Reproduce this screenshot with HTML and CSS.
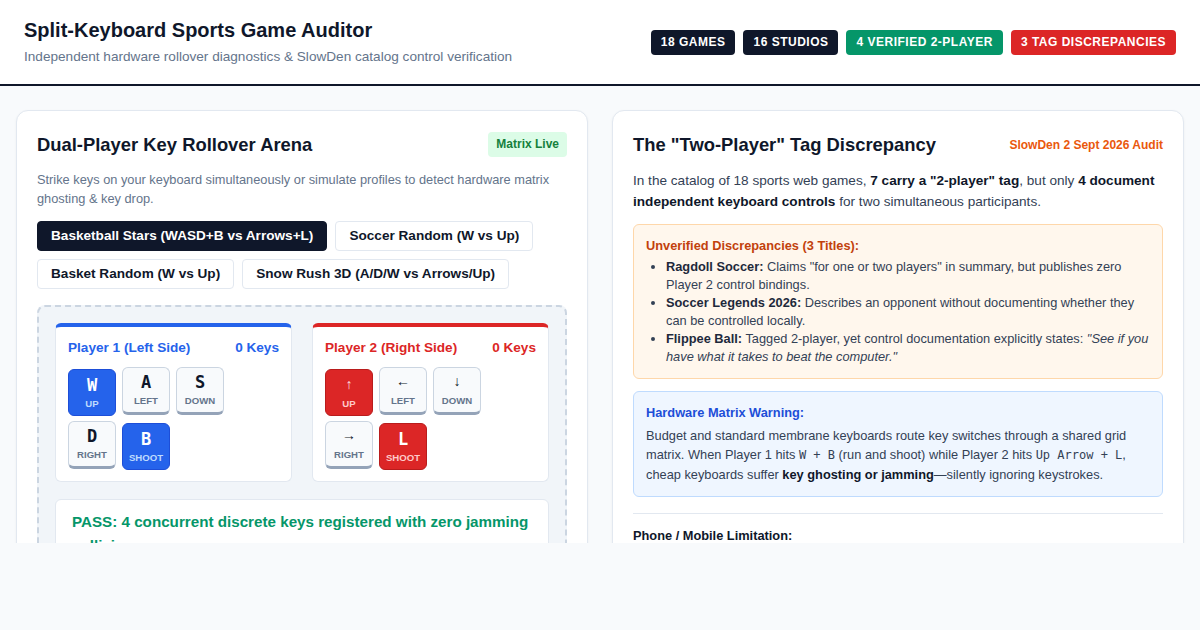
FILE: index.html
```html
<!DOCTYPE html>
<html lang="en">
<head>
<meta charset="utf-8">
<title>Split-Keyboard Sports Game Auditor</title>
<link rel="stylesheet" href="styles.css">
</head>
<body>
<header class="topbar">
  <div class="brand">
    <h1>Split-Keyboard Sports Game Auditor</h1>
    <p>Independent hardware rollover diagnostics &amp; SlowDen catalog control verification</p>
  </div>
  <div class="stats">
    <span class="stat stat-dark">18 Games</span>
    <span class="stat stat-dark">16 Studios</span>
    <span class="stat stat-green">4 Verified 2-Player</span>
    <span class="stat stat-red">3 Tag Discrepancies</span>
  </div>
</header>

<main class="layout">
  <section class="card">
    <div class="card-head">
      <h2>Dual-Player Key Rollover Arena</h2>
      <span class="live">Matrix Live</span>
    </div>
    <p class="muted">Strike keys on your keyboard simultaneously or simulate profiles to detect hardware matrix ghosting &amp; key drop.</p>
    <div class="profiles">
      <button class="profile active">Basketball Stars (WASD+B vs Arrows+L)</button>
      <button class="profile">Soccer Random (W vs Up)</button>
      <button class="profile">Basket Random (W vs Up)</button>
      <button class="profile">Snow Rush 3D (A/D/W vs Arrows/Up)</button>
    </div>
    <div class="arena">
      <div class="players">
        <div class="player player-one">
          <div class="player-head"><span>Player 1 (Left Side)</span><span>0 Keys</span></div>
          <div class="keys">
            <div class="key on"><span class="cap">W</span><span class="lbl">Up</span></div>
            <div class="key"><span class="cap">A</span><span class="lbl">Left</span></div>
            <div class="key"><span class="cap">S</span><span class="lbl">Down</span></div>
            <div class="key"><span class="cap">D</span><span class="lbl">Right</span></div>
            <div class="key on"><span class="cap">B</span><span class="lbl">Shoot</span></div>
          </div>
        </div>
        <div class="player player-two">
          <div class="player-head"><span>Player 2 (Right Side)</span><span>0 Keys</span></div>
          <div class="keys">
            <div class="key on"><span class="cap arrow">↑</span><span class="lbl">Up</span></div>
            <div class="key"><span class="cap arrow">←</span><span class="lbl">Left</span></div>
            <div class="key"><span class="cap arrow">↓</span><span class="lbl">Down</span></div>
            <div class="key"><span class="cap arrow">→</span><span class="lbl">Right</span></div>
            <div class="key on"><span class="cap">L</span><span class="lbl">Shoot</span></div>
          </div>
        </div>
      </div>
      <div class="result">PASS: 4 concurrent discrete keys registered with zero jamming collisions.</div>
    </div>
  </section>

  <section class="card">
    <div class="card-head">
      <h2>The "Two-Player" Tag Discrepancy</h2>
      <span class="audit">SlowDen 2 Sept 2026 Audit</span>
    </div>
    <p class="lead">In the catalog of 18 sports web games, <strong>7 carry a "2-player" tag</strong>, but only <strong>4 document independent keyboard controls</strong> for two simultaneous participants.</p>
    <div class="box box-orange">
      <h3>Unverified Discrepancies (3 Titles):</h3>
      <ul>
        <li><strong>Ragdoll Soccer:</strong> Claims "for one or two players" in summary, but publishes zero Player 2 control bindings.</li>
        <li><strong>Soccer Legends 2026:</strong> Describes an opponent without documenting whether they can be controlled locally.</li>
        <li><strong>Flippee Ball:</strong> Tagged 2-player, yet control documentation explicitly states: <em>"See if you have what it takes to beat the computer."</em></li>
      </ul>
    </div>
    <div class="box box-blue">
      <h3>Hardware Matrix Warning:</h3>
      <p>Budget and standard membrane keyboards route key switches through a shared grid matrix. When Player 1 hits <code>W + B</code> (run and shoot) while Player 2 hits <code>Up Arrow + L</code>, cheap keyboards suffer <strong>key ghosting or jamming</strong>—silently ignoring keystrokes.</p>
    </div>
    <hr class="divider">
    <h3 class="sub">Phone / Mobile Limitation:</h3>
  </section>
</main>
</body>
</html>
```

FILE: styles.css
```css
* { box-sizing: border-box; }

html, body {
  margin: 0;
  padding: 0;
  background: #f8fafc;
  font-family: "Liberation Sans", Arial, sans-serif;
  color: #0f172a;
}

.topbar {
  display: flex;
  justify-content: space-between;
  align-items: center;
  padding: 17px 24px;
  background: #ffffff;
  border-bottom: 2px solid #0f172a;
}

.brand h1 {
  margin: 0 0 4px;
  font-size: 20px;
  line-height: 26px;
  font-weight: 700;
  color: #0f172a;
}

.brand p {
  margin: 0;
  font-size: 13.6px;
  line-height: 20px;
  color: #64748b;
}

.stats {
  display: flex;
  gap: 8px;
}

.stat {
  display: inline-block;
  padding: 6px 10px;
  border-radius: 4px;
  font-size: 12px;
  line-height: 13px;
  font-weight: 700;
  letter-spacing: 0.5px;
  text-transform: uppercase;
  color: #ffffff;
}

.stat-dark { background: #0f172a; }
.stat-green { background: #059669; }
.stat-red { background: #dc2626; }

.layout {
  display: grid;
  grid-template-columns: 1fr 1fr;
  gap: 24px;
  align-items: start;
  padding: 24px 16px 0;
  height: 457px;
  overflow: hidden;
}

.card {
  background: #ffffff;
  border: 1px solid #e2e8f0;
  border-radius: 12px;
  padding: 21px 20px 24px;
  box-shadow: 0 1px 3px rgba(15, 23, 42, 0.05);
}

.card-head {
  display: flex;
  justify-content: space-between;
  align-items: center;
  margin-bottom: 13px;
  min-height: 25px;
}

.card-head h2 {
  margin: 0;
  font-size: 18.4px;
  line-height: 25px;
  font-weight: 700;
  color: #0f172a;
}

.live {
  padding: 4px 8px;
  border-radius: 4px;
  background: #dcfce7;
  color: #15803d;
  font-size: 12px;
  line-height: 17px;
  font-weight: 700;
}

.audit {
  color: #ea580c;
  font-size: 12px;
  font-weight: 700;
}

.muted {
  margin: 0 0 13px;
  font-size: 12.8px;
  line-height: 19.2px;
  color: #64748b;
}

.profiles {
  display: flex;
  flex-wrap: wrap;
  gap: 8px;
  margin-bottom: 16px;
}

.profile {
  font-family: "Liberation Sans", Arial, sans-serif;
  font-size: 13.6px;
  line-height: 18px;
  font-weight: 700;
  padding: 5px 13px;
  border: 1px solid #e2e8f0;
  border-radius: 4px;
  background: #ffffff;
  color: #0f172a;
}

.profile.active {
  background: #0f172a;
  border-color: #0f172a;
  color: #ffffff;
}

.arena {
  background: #f1f5f9;
  border: 2px dashed #cbd5e1;
  border-radius: 8px;
  padding: 16px;
}

.players {
  display: grid;
  grid-template-columns: 1fr 1fr;
  gap: 20px;
}

.player {
  background: #ffffff;
  border: 1px solid #e2e8f0;
  border-top: 4px solid #2563eb;
  border-radius: 6px;
  padding: 12px;
}

.player-two { border-top-color: #dc2626; }

.player-head {
  display: flex;
  justify-content: space-between;
  font-size: 13.6px;
  line-height: 18px;
  font-weight: 700;
  margin-bottom: 10px;
  color: #2563eb;
}

.player-two .player-head { color: #dc2626; }

.keys {
  display: grid;
  grid-template-columns: repeat(3, 48px);
  gap: 6px;
  align-items: start;
}

.key {
  height: 48px;
  display: flex;
  flex-direction: column;
  align-items: center;
  justify-content: center;
  gap: 3px;
  background: #f8fafc;
  border: 1px solid #cbd5e1;
  border-bottom: 3px solid #94a3b8;
  border-radius: 6px;
}

.cap {
  font-family: "DejaVu Sans Mono", "Liberation Mono", monospace;
  font-size: 17px;
  line-height: 19px;
  font-weight: 700;
  color: #0f172a;
}

.cap.arrow {
  font-family: "Liberation Mono", monospace;
  font-weight: 400;
  font-size: 14px;
}

.lbl {
  font-size: 9.6px;
  line-height: 12px;
  font-weight: 700;
  text-transform: uppercase;
  color: #64748b;
}

.key.on {
  height: 47px;
  border-bottom-width: 1px;
  transform: translateY(2px);
}

.player-one .key.on {
  background: #2563eb;
  border-color: #1d4ed8;
}

.player-two .key.on {
  background: #dc2626;
  border-color: #b91c1c;
}

.key.on .cap { color: #ffffff; }
.player-one .key.on .lbl { color: #bfdbfe; }
.player-two .key.on .lbl { color: #fecaca; }
.player-two .key.on .cap.arrow { color: #fee2e2; }

.result {
  margin-top: 17px;
  background: #ffffff;
  border: 1px solid #e2e8f0;
  border-radius: 6px;
  padding: 10px 16px;
  font-size: 15.2px;
  line-height: 24px;
  font-weight: 700;
  color: #059669;
}

.lead {
  margin: 0 0 12px;
  font-size: 13.6px;
  line-height: 21px;
  color: #334155;
}

.lead strong { color: #0f172a; }

.box {
  border-radius: 6px;
  padding: 12px;
  font-size: 12.8px;
}

.box h3 {
  margin: 0;
  font-size: 12.8px;
  line-height: 17px;
  font-weight: 700;
}

.box-orange {
  background: #fff7ed;
  border: 1px solid #fed7aa;
}

.box-orange h3 { color: #c2410c; }

.box-orange ul {
  margin: 4px 0 0;
  padding-left: 20px;
  line-height: 18px;
  color: #334155;
}

.box-orange strong { color: #1e293b; }

.box-blue {
  margin-top: 12px;
  background: #eff6ff;
  border: 1px solid #bfdbfe;
}

.box-blue h3 { color: #1d4ed8; }

.box-blue p {
  margin: 5px 0 0;
  line-height: 19px;
  color: #334155;
}

.box-blue strong { color: #0f172a; }

code {
  font-family: "DejaVu Sans Mono", "Liberation Mono", monospace;
  font-size: 12px;
  color: #334155;
}

.divider {
  margin: 16px 0 13px;
  border: 0;
  border-top: 1px solid #e2e8f0;
}

.sub {
  margin: 0;
  font-size: 12.8px;
  line-height: 17px;
  font-weight: 700;
  color: #0f172a;
}
```
